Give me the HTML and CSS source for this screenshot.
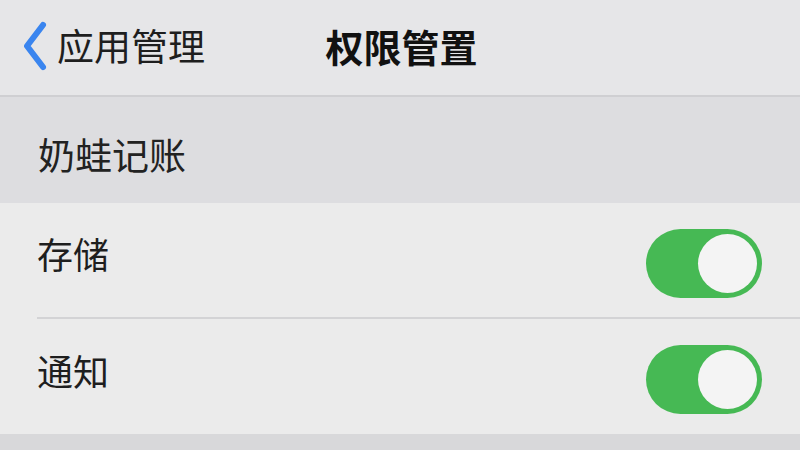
FILE: index.html
```html
<!DOCTYPE html>
<html lang="zh-CN">
<head>
<meta charset="utf-8">
<link rel="stylesheet" href="styles.css">
</head>
<body>
<div class="screen">
  <header class="nav">
    <div class="back">
      <svg class="chevron" width="28" height="50" viewBox="0 0 28 50">
        <path d="M22 4 L6 25 L22 46" fill="none" stroke="#3a85ef" stroke-width="6" stroke-linecap="round" stroke-linejoin="round"/>
      </svg>
      <span class="back-text">应用管理</span>
    </div>
    <div class="title">权限管置</div>
    <div class="spacer"></div>
  </header>
  <div class="section-header">奶蛙记账</div>
  <div class="list">
    <div class="row">
      <span class="label">存储</span>
      <span class="toggle"><span class="knob"></span></span>
    </div>
    <div class="row last">
      <span class="label">通知</span>
      <span class="toggle"><span class="knob"></span></span>
    </div>
  </div>
  <div class="footer"></div>
</div>
</body>
</html>
```
FILE: styles.css
```css
html, body {
  margin: 0;
  padding: 0;
}
body {
  width: 800px;
  height: 450px;
  overflow: hidden;
  font-family: "Noto Sans CJK SC", "Noto Sans", sans-serif;
  color: #1f1f1f;
  background: #dcdcde;
}
.screen {
  display: flex;
  flex-direction: column;
  height: 450px;
}
.nav {
  height: 97px;
  box-sizing: border-box;
  background: #e6e6e8;
  border-bottom: 2px solid #cfcfd2;
  display: grid;
  grid-template-columns: 1fr auto 1fr;
  align-items: center;
}
.back {
  display: flex;
  align-items: center;
  padding-left: 21px;
  gap: 8px;
  padding-bottom: 4px;
}
.chevron {
  display: block;
}
.back-text {
  font-size: 37px;
  line-height: 1;
  color: #1e1e1e;
}
.title {
  font-size: 38px;
  font-weight: 700;
  line-height: 1;
  color: #111;
  padding-bottom: 4px;
  padding-left: 3px;
}
.section-header {
  height: 106px;
  box-sizing: border-box;
  background: #dddde0;
  font-size: 37px;
  line-height: 1;
  padding: 39px 0 0 38px;
  color: #222;
}
.list {
  background: #ebebeb;
  padding-left: 37px;
}
.row {
  height: 116px;
  box-sizing: border-box;
  border-bottom: 2px solid #d3d3d5;
  display: flex;
  align-items: center;
  justify-content: space-between;
  padding-right: 38px;
}
.row.last {
  border-bottom: none;
  height: 115px;
}
.label {
  font-size: 36px;
  line-height: 1;
  padding-bottom: 14px;
  color: #1e1e1e;
}
.toggle {
  width: 116px;
  height: 69px;
  border-radius: 35px;
  background: #46b954;
  display: flex;
  align-items: center;
  justify-content: flex-end;
  padding: 0 5px;
  box-sizing: border-box;
  margin-top: 6px;
}
.knob {
  width: 59px;
  height: 59px;
  border-radius: 50%;
  background: #f4f4f4;
}
.footer {
  flex: 1;
  background: #d8d8da;
}
```
